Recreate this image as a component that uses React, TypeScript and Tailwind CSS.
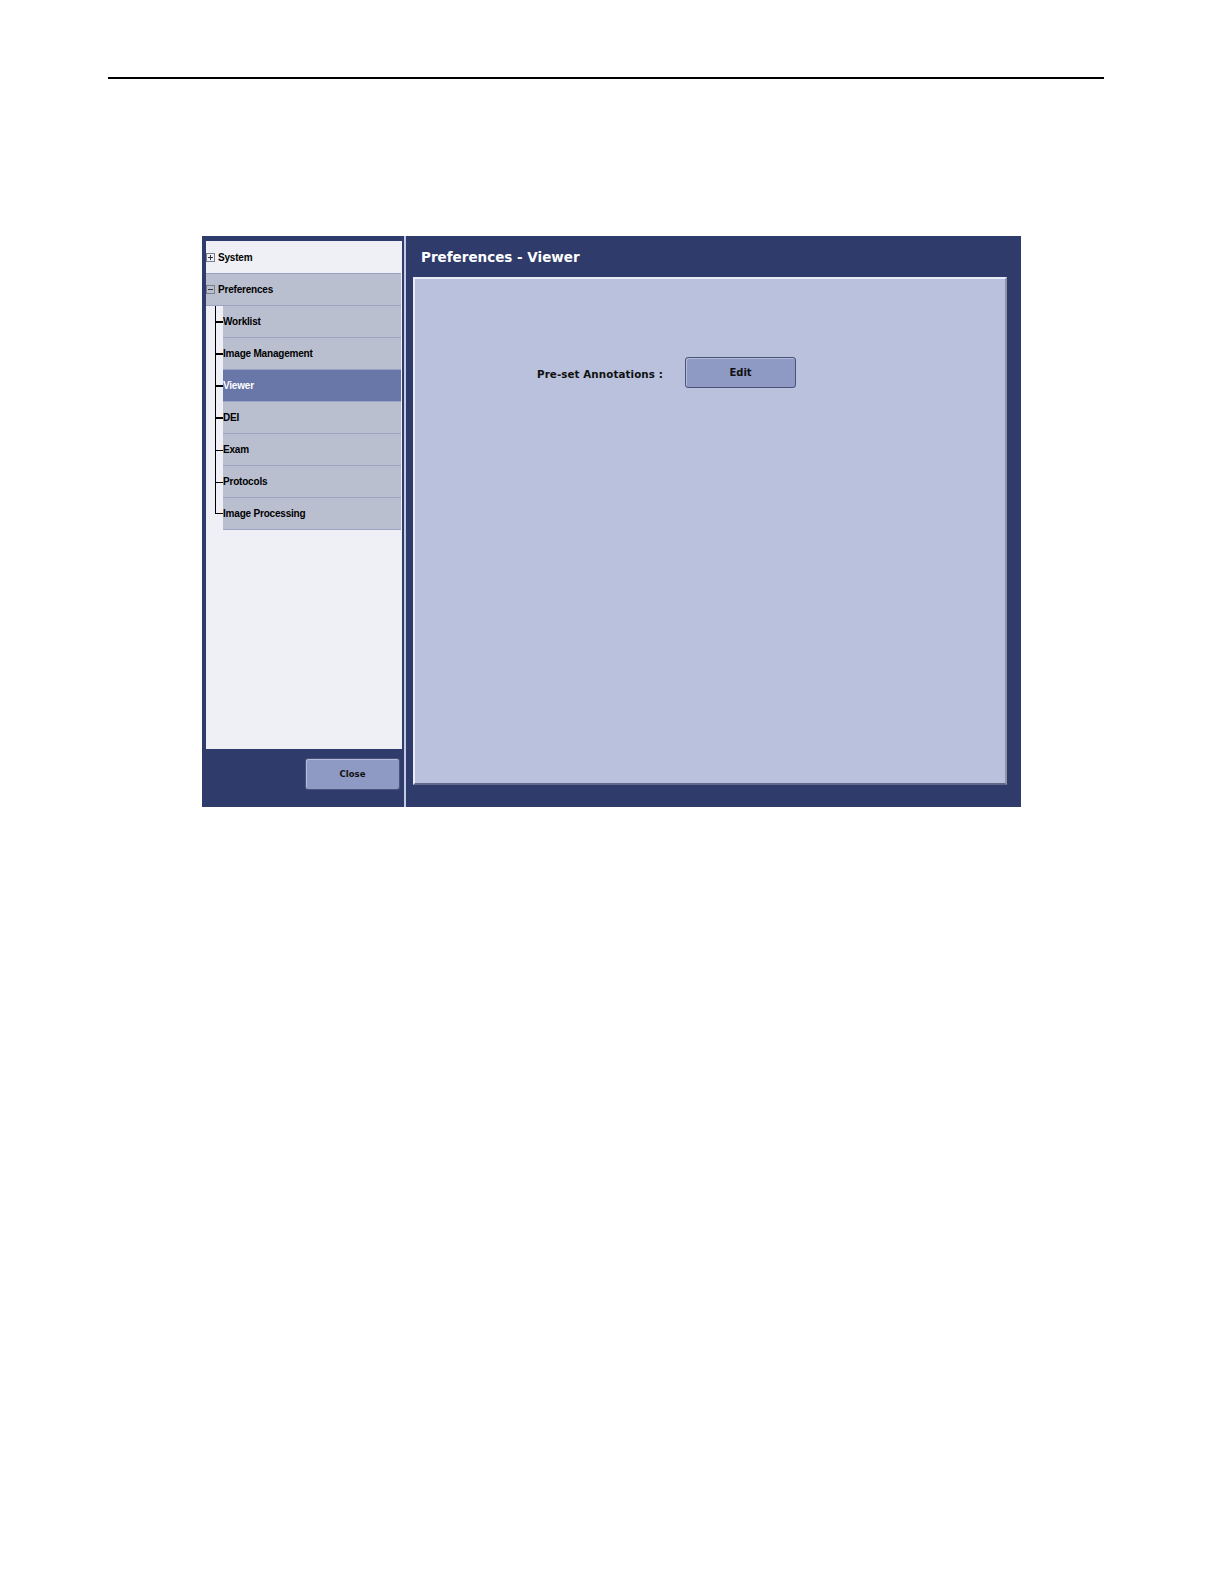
import React from "react";

const NAVY = "bg-[#2f3c6b]";

function PlusMinus({ plus }: { plus: boolean }) {
  return (
    <svg width="9" height="9" viewBox="0 0 9 9" className="shrink-0">
      <rect x="0.5" y="0.5" width="8" height="8" fill="none" stroke="#7a7f8c" strokeWidth="1" />
      <line x1="2" y1="4.5" x2="7" y2="4.5" stroke="#333" strokeWidth="1" />
      {plus && <line x1="4.5" y1="2" x2="4.5" y2="7" stroke="#333" strokeWidth="1" />}
    </svg>
  );
}

const treeFont = { fontFamily: '"Liberation Sans", Arial, sans-serif' };
const dejaFont = { fontFamily: '"DejaVu Sans", Verdana, sans-serif' };

const children = [
  { label: "Worklist", thick: true },
  { label: "Image Management", thick: true },
  { label: "Viewer", thick: true, selected: true },
  { label: "DEI", thick: true },
  { label: "Exam" },
  { label: "Protocols" },
  { label: "Image Processing", last: true },
] as { label: string; thick?: boolean; selected?: boolean; last?: boolean }[];

function ChildRow({ label, thick, selected, last }: { label: string; thick?: boolean; selected?: boolean; last?: boolean }) {
  return (
    <div className="flex h-[32px]">
      <div className="w-[17px] shrink-0 flex">
        {last ? (
          <div className="ml-[9px] w-[8px] h-[16px] border-l border-b border-black" />
        ) : (
          <div className="ml-[9px] w-[8px] h-full border-l border-black flex items-center">
            <div className={`w-full bg-black ${thick ? "h-[2px]" : "h-px"}`} />
          </div>
        )}
      </div>
      <div
        className={`flex-1 flex items-center border-b border-[#9aa2c6] ${
          selected ? "bg-[#6976a8] text-white" : "bg-[#babfd0] text-black"
        }`}
      >
        <span className="text-[10px] font-bold tracking-[-0.2px] leading-none" style={treeFont}>
          {label}
        </span>
      </div>
    </div>
  );
}

function Button({ label, className, textClass }: { label: string; className: string; textClass: string }) {
  return (
    <div
      className={`flex items-center justify-center rounded-[3px] border border-[#4a5278] bg-[#8e99c4] shadow-[inset_1px_1px_0_#b4bcdc] ${className}`}
    >
      <span className={`font-bold text-[#111] leading-none ${textClass}`} style={dejaFont}>
        {label}
      </span>
    </div>
  );
}

export default function App() {
  return (
    <div className="w-[1224px] min-h-[1584px] bg-white flex flex-col">
      <div className="mt-[77px] ml-[108px] w-[996px] h-[2px] bg-black" />

      <div className={`mt-[157px] ml-[202px] w-[819px] h-[571px] flex ${NAVY}`}>
        {/* Left column */}
        <div className="w-[200px] shrink-0 pl-[4px] pt-[5px] flex flex-col">
          <div className="w-[196px] h-[508px] bg-[#eef0f6] pr-[1px] pt-[1px] flex flex-col">
            <div className="flex items-center h-[32px] border-b border-[#9aa2c6] gap-[3px]">
              <PlusMinus plus />
              <span className="text-[10px] font-bold tracking-[-0.2px] leading-none text-black" style={treeFont}>
                System
              </span>
            </div>
            <div className="flex items-center h-[32px] border-b border-[#9aa2c6] bg-[#babfd0] gap-[3px]">
              <PlusMinus plus={false} />
              <span className="text-[10px] font-bold tracking-[-0.2px] leading-none text-black" style={treeFont}>
                Preferences
              </span>
            </div>
            {children.map((c) => (
              <ChildRow key={c.label} {...c} />
            ))}
          </div>
          <div className="mt-[9px] flex justify-end pr-[2px]">
            <Button label="Close" className="w-[95px] h-[32px]" textClass="text-[8.5px]" />
          </div>
        </div>

        {/* Divider */}
        <div className="ml-[2px] w-[2px] h-full bg-[#c3c9e6] shrink-0" />

        {/* Right panel */}
        <div className="flex-1 flex flex-col">
          <div className="h-[41px] flex items-center pl-[15px] pt-[3px]">
            <span className="text-white font-bold text-[13.5px] leading-none" style={dejaFont}>
              Preferences - Viewer
            </span>
          </div>
          <div className="ml-[7px] w-[594px] h-[508px] bg-[#b9c1dc] border-2 border-t-[#e9ecf6] border-l-[#e9ecf6] border-r-[#8d94a9] border-b-[#5f6888]">
            <div className="pt-[78px] pl-[122px] flex items-center">
              <div className="w-[148px] shrink-0 pb-[1px]">
                <span className="text-[10.3px] font-bold text-[#111] leading-none tracking-[0.1px]" style={dejaFont}>
                  Pre-set Annotations :
                </span>
              </div>
              <Button label="Edit" className="w-[111px] h-[31px]" textClass="text-[10px]" />
            </div>
          </div>
        </div>
      </div>
    </div>
  );
}
